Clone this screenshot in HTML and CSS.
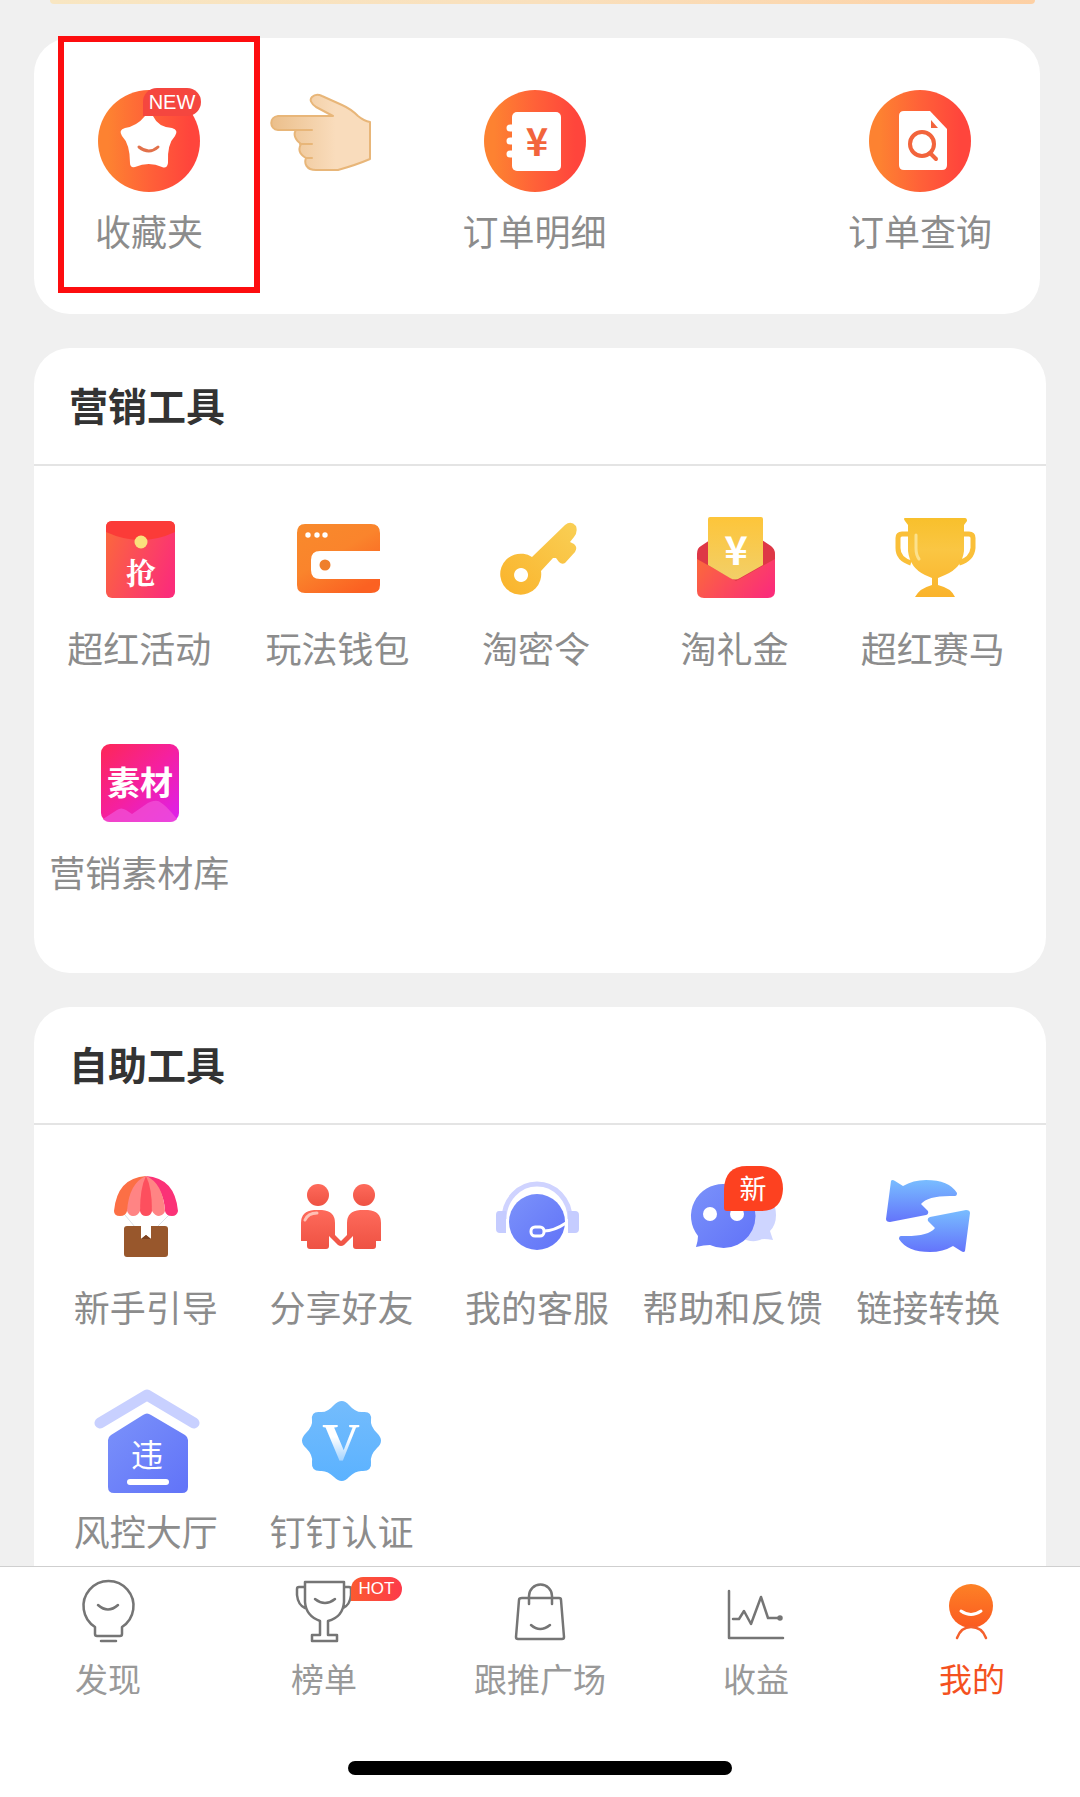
FILE: index.html
```html
<!DOCTYPE html>
<html lang="zh-CN">
<head>
<meta charset="utf-8">
<meta name="viewport" content="width=device-width, initial-scale=1">
<title>我的</title>
<link rel="stylesheet" href="styles.css">
</head>
<body>
<svg class="defs" aria-hidden="true">
  <defs>
    <linearGradient id="g-hot"><stop offset="0.1" stop-color="#fd8231"/><stop offset="0.5" stop-color="#ff6138"/><stop offset="0.9" stop-color="#ff453c"/></linearGradient>
    <linearGradient id="g-red" x1="0" y1="0.3" x2="1" y2="0.7"><stop offset="0" stop-color="#fb6440"/><stop offset="1" stop-color="#fb2d79"/></linearGradient>
    <linearGradient id="g-orange" x1="0" y1="0" x2="0.7" y2="1"><stop offset="0" stop-color="#f88a2c"/><stop offset="0.5" stop-color="#fa842c"/><stop offset="1" stop-color="#fb6122"/></linearGradient>
    <linearGradient id="g-gold" x1="1" y1="0" x2="0" y2="1"><stop offset="0" stop-color="#f9cf55"/><stop offset="1" stop-color="#fab32b"/></linearGradient>
    <linearGradient id="g-cup" x1="0" y1="0" x2="0" y2="1"><stop offset="0" stop-color="#f8c02c"/><stop offset="0.4" stop-color="#fac643"/><stop offset="1" stop-color="#fab32b"/></linearGradient>
    <linearGradient id="g-paper" x1="0" y1="0" x2="0" y2="1"><stop offset="0" stop-color="#fdc53a"/><stop offset="1" stop-color="#f2cf68"/></linearGradient>
    <linearGradient id="g-pink" x1="0" y1="0" x2="1" y2="1"><stop offset="0" stop-color="#fd2756"/><stop offset="0.5" stop-color="#f5209f"/><stop offset="1" stop-color="#dc20f0"/></linearGradient>
    <linearGradient id="g-people" x1="0" y1="0" x2="0" y2="1"><stop offset="0" stop-color="#fe6a5b"/><stop offset="1" stop-color="#ee5243"/></linearGradient>
    <linearGradient id="g-blue" x1="0" y1="0" x2="1" y2="1"><stop offset="0" stop-color="#7b92fa"/><stop offset="1" stop-color="#6173f8"/></linearGradient>
    <linearGradient id="g-arrow" x1="0" y1="0" x2="0" y2="1"><stop offset="0" stop-color="#79bdff"/><stop offset="1" stop-color="#6474fb"/></linearGradient>
    <linearGradient id="g-arrow2" x1="0" y1="1" x2="0" y2="0"><stop offset="0" stop-color="#79bdff"/><stop offset="1" stop-color="#6474fb"/></linearGradient>
    <linearGradient id="g-sky" x1="0" y1="0" x2="0" y2="1"><stop offset="0" stop-color="#74bcfc"/><stop offset="1" stop-color="#5bb2ff"/></linearGradient>
    <linearGradient id="g-v" x1="0" y1="0" x2="0" y2="1"><stop offset="0.4" stop-color="#fff"/><stop offset="0.8" stop-color="#a9d6ff"/></linearGradient>
    <linearGradient id="g-me" x1="0" y1="0" x2="0" y2="1"><stop offset="0" stop-color="#fd8126"/><stop offset="1" stop-color="#fb5a20"/></linearGradient>
    <linearGradient id="g-hand"><stop offset="0" stop-color="#ebbf8b"/><stop offset="0.65" stop-color="#f9dcbc"/></linearGradient>
  </defs>
</svg>

<main class="page">
  <div class="banner"></div>

  <section class="card shortcuts">
    <a class="item" href="#">
      <svg class="disc" viewBox="0 0 102 102"><circle cx="51" cy="51" r="51" fill="url(#g-hot)"/><path d="M47 26Q51 24 55 26Q60 37 74 38Q81 40 77 46Q69 54 70 73Q69 79 64 77Q51 71 37 77Q32 78 32 73Q32 54 24 46Q20 40 27 38Q39 36 47 26Z" fill="#fff"/><path d="M41 57Q51 65 60 57" fill="none" stroke="#e2714b" stroke-width="3" stroke-linecap="round"/></svg>
      <span class="label">收藏夹</span>
      <span class="tag tag-new">NEW</span>
    </a>
    <a class="item" href="#">
      <svg class="disc" viewBox="0 0 102 102"><circle cx="51" cy="51" r="51" fill="url(#g-hot)"/><rect x="28" y="22" width="49" height="59" rx="5" fill="#fff"/><path d="M26 38h6M26 51h6M26 64h6" stroke="#fff" stroke-width="7" stroke-linecap="round"/><text class="glyph glyph-yen" x="53" y="66">¥</text></svg>
      <span class="label">订单明细</span>
    </a>
    <a class="item" href="#">
      <svg class="disc" viewBox="0 0 102 102"><circle cx="51" cy="51" r="51" fill="url(#g-hot)"/><path d="M35 21H61L78 39V75Q78 80 73 80H35Q30 80 30 75V26Q30 21 35 21Z" fill="#fff"/><path d="M62 30V38H69Z" fill="#f2643c"/><circle cx="53" cy="54" r="12" fill="none" stroke="#f2643c" stroke-width="4"/><path d="M61 63l6 6" stroke="#f2643c" stroke-width="4" stroke-linecap="round"/></svg>
      <span class="label">订单查询</span>
    </a>
    <span class="highlight"></span>
    <svg class="hand" viewBox="0 0 102 78" aria-hidden="true"><path d="M8 23H63L46 14Q38 8 42 4Q46 0 52 3L72 12Q81 16 88 23Q94 28 100 29V66Q86 72 68 77H46C36 77 34 70 36 65C29 61 28 56 31 51C25 47 23 41 26 37H8C-1 36-1 24 8 23Z" fill="url(#g-hand)" stroke="#e8b679" stroke-width="2" stroke-linejoin="round"/><path d="M26 37H42M30 51H42M36 65H42" stroke="#e8b679" stroke-width="2" stroke-linecap="round"/></svg>
  </section>

  <section class="card">
    <h2 class="title">营销工具</h2>
    <div class="grid grid-wide">
      <a class="item" href="#">
        <svg class="icon" viewBox="0 0 110 110"><rect x="22" y="17" width="69" height="77" rx="6" fill="url(#g-red)"/><path d="M22 28V23Q22 17 28 17H85Q91 17 91 23V28Q57 44 22 28Z" fill="#fb3b38"/><circle cx="57" cy="38" r="6.500" fill="#fae17c"/><text class="glyph glyph-serif" x="57" y="80">抢</text></svg>
        <span class="label">超红活动</span>
      </a>
      <a class="item" href="#">
        <svg class="icon" viewBox="0 0 110 110"><path d="M22 20H88Q97 20 97 29V47H37Q28 47 28 56V66Q28 75 37 75H97V81Q97 89 88 89H22Q14 89 14 81V29Q14 20 22 20Z" fill="url(#g-orange)"/><circle cx="42" cy="61" r="5.500" fill="#ef7f2c"/><g fill="#fff"><circle cx="25" cy="31" r="2.700"/><circle cx="34" cy="31" r="2.700"/><circle cx="42" cy="31" r="2.700"/></g></svg>
        <span class="label">玩法钱包</span>
      </a>
      <a class="item" href="#">
        <svg class="icon" viewBox="0 0 110 110"><path fill="url(#g-gold)" fill-rule="evenodd" d="M51 53L84 21Q90 16 95 22Q97 28 93 33L89 38L93 40Q97 43 94 48L84 59Q81 61 78 58L75 54L72 54L60 67A20.500 20.500 0 1 1 51 53ZM40 64a7 7 0 1 0 .1 0Z"/></svg>
        <span class="label">淘密令</span>
      </a>
      <a class="item" href="#">
        <svg class="icon" viewBox="0 0 110 110"><path d="M18 57V50Q18 44 22 42L34 34H80L92 42Q96 45 96 50V57L80 80H34Z" fill="#de3746"/><path d="M18 55L57 77L96 55V87Q96 94 89 94H25Q18 94 18 87Z" fill="url(#g-red)"/><path d="M31 13H82Q84 13 84 15V61L61 74Q56 77 51 74L29 61V15Q29 13 31 13Z" fill="url(#g-paper)"/><text class="glyph glyph-cash" x="57" y="61">¥</text></svg>
        <span class="label">淘礼金</span>
      </a>
      <a class="item" href="#">
        <svg class="icon" viewBox="0 0 110 110"><path fill="url(#g-cup)" d="M27 14H87Q89 14 89 17L86 21V47Q84 64 67 71L60 74V81Q73 84 77 93H37Q42 84 54 81V74L47 71Q32 64 30 47V21L27 17Q25 14 27 14Z"/><path d="M31 30H24Q20 30 20 34V44Q20 55 33 59M85 30H91Q95 30 95 34V44Q94 55 81 59" fill="none" stroke="#fabf38" stroke-width="5"/><path d="M38 31V44Q38 51 41 55" stroke="#fce18d" stroke-width="3" stroke-linecap="round" fill="none"/></svg>
        <span class="label">超红赛马</span>
      </a>
      <a class="item" href="#">
        <svg class="icon" viewBox="0 0 110 110"><rect x="17" y="16" width="78" height="78" rx="9" fill="url(#g-pink)"/><path d="M19 91L33 82Q37 79 42 82L48 86L61 77Q68 72 74 73Q80 75 93 91Q91 94 86 94H26Q21 94 19 91Z" fill="#f154d8" opacity=".7"/><text class="glyph glyph-heavy" x="56" y="67">素材</text></svg>
        <span class="label">营销素材库</span>
      </a>
    </div>
  </section>

  <section class="card card-last">
    <h2 class="title">自助工具</h2>
    <div class="grid grid-narrow">
      <a class="item" href="#">
        <svg class="icon" viewBox="0 0 110 110"><path d="M34 52L44 64M78 52L66 64" stroke="#dbe0e6" stroke-width="1"/><path d="M55 13Q26 15 23 48Q23 53 29 53Q35 53 36 48Z" fill="#fc6f45"/><path d="M55 13Q84 15 87 48Q86 53 81 53Q75 53 74 48Q73 25 55 13Z" fill="#fb3277"/><path d="M55 13Q38 20 36 48Q38 53 42 53Q47 53 49 48L55 20L61 48Q64 53 68 53Q73 52 74 48Q72 20 55 13Z" fill="#ff8484"/><path d="M55 13Q49 25 49 48Q50 53 55 53Q60 53 61 48Q61 25 55 13Z" fill="#fd4f5e"/><path d="M36 63H50V76L55 72L60 76V63H74Q77 63 77 66V91Q77 94 74 94H36Q33 94 33 91V66Q33 63 36 63Z" fill="#98572c"/><path d="M50 76L55 72L60 76Z" fill="#7b4220"/></svg>
        <span class="label">新手引导</span>
      </a>
      <a class="item" href="#">
        <svg class="icon" viewBox="0 0 110 110"><g fill="url(#g-people)"><circle cx="32" cy="32" r="11"/><circle cx="78" cy="32" r="11"/><path d="M28 47H36Q49 48 49 60V72L55 78L61 72V60Q61 48 74 47H82Q95 48 95 60V78H90V83Q90 86 87 86H70Q67 86 67 83V73L58 82Q55 84 52 82L43 73V83Q43 86 40 86H24Q21 86 21 83V78H15V60Q15 48 28 47Z"/></g><path d="M19 57Q22 50 31 50" stroke="#ffc0b5" stroke-width="3" stroke-linecap="round" fill="none"/></svg>
        <span class="label">分享好友</span>
      </a>
      <a class="item" href="#">
        <svg class="icon" viewBox="0 0 110 110"><path d="M22 56A33 35 0 0 1 88 56" fill="none" stroke="#cfd3ff" stroke-width="5"/><path d="M17 48H24V70H18Q14 70 14 66V52Q14 48 17 48ZM86 48H93Q97 48 97 52V66Q97 70 93 70H86Z" fill="#c5ccff"/><circle cx="55" cy="59" r="28" fill="url(#g-blue)"/><rect x="49" y="64" width="13" height="9" rx="4" fill="none" stroke="#fff" stroke-width="3"/><path d="M62 68Q72 68 84 60" fill="none" stroke="#fff" stroke-width="3"/></svg>
        <span class="label">我的客服</span>
      </a>
      <a class="item" href="#">
        <svg class="icon" viewBox="0 0 110 110"><path d="M70 24Q98 30 98 52Q98 62 92 68L95 77Q84 75 82 77Q74 80 62 75Z" fill="#ced5ff"/><path d="M46 21A32 32 0 1 1 32 82Q26 82 18 84Q20 78 20 73A32 32 0 0 1 46 21Z" fill="url(#g-blue)"/><circle cx="32" cy="51" r="7" fill="#fff"/><circle cx="59" cy="51" r="7" fill="#fff"/><path d="M46 45V26Q47 3 69 3H83Q105 4 105 26Q104 48 83 48H49Q46 48 46 45Z" fill="#fd4120"/><text class="glyph glyph-badge" x="75" y="36">新</text></svg>
        <span class="label">帮助和反馈</span>
      </a>
      <a class="item" href="#">
        <svg class="icon" viewBox="0 0 110 110"><path d="M18 18Q19 16 22 18L30 23Q40 17 53 17Q76 17 84 30Q84 33 82 33Q55 32 48 41L55 48Q56 51 53 52L17 59Q13 59 13 56Z" fill="url(#g-arrow)"/><path d="M18 18Q19 16 22 18L30 23Q40 17 53 17Q76 17 84 30Q84 33 82 33Q55 32 48 41L55 48Q56 51 53 52L17 59Q13 59 13 56Z" transform="rotate(180 55 53)" fill="url(#g-arrow2)"/></svg>
        <span class="label">链接转换</span>
      </a>
      <a class="item" href="#">
        <svg class="icon" viewBox="0 0 110 110"><path d="M9 36L56 8L103 36" fill="none" stroke="#c8d0ff" stroke-width="11" stroke-linecap="round" stroke-linejoin="round"/><path d="M52 28Q56 25 60 28L94 48Q97 50 97 53V100Q97 106 91 106H23Q17 106 17 100V53Q17 50 20 48Z" fill="url(#g-blue)"/><text class="glyph glyph-house" x="56" y="80">违</text><rect x="36" y="92" width="42" height="6" rx="3" fill="#fff"/></svg>
        <span class="label">风控大厅</span>
      </a>
      <a class="item" href="#">
        <svg class="icon" viewBox="0 0 110 110"><path d="M48 18Q56 10 63 18Q70 26 77 25Q86 24 85 33Q84 39 91 46Q99 54 91 61Q84 68 85 75Q86 84 77 84Q70 83 63 90Q56 98 48 90Q41 83 34 84Q25 84 26 75Q27 68 20 61Q12 54 20 46Q27 39 26 33Q25 24 34 25Q41 26 48 18Z" fill="url(#g-sky)"/><text class="glyph glyph-v" x="55" y="73">V</text></svg>
        <span class="label">钉钉认证</span>
      </a>
    </div>
  </section>
</main>

<nav class="tabbar">
  <div class="tabs">
    <a class="tab" href="#"><svg class="tab-icon" viewBox="0 0 64 64"><path d="M19 49A25 25 0 1 1 46 49V56Q46 58 44 58H21Q19 58 19 56ZM22 27Q32 36 42 27M25 63H40"/></svg><span>发现</span></a>
    <a class="tab" href="#"><svg class="tab-icon" viewBox="0 0 64 64"><path d="M13 4H52V24Q51 39 36 43V57H45V63H20V57H28V43Q14 38 13 24ZM13 9H7Q5 9 5 11V17Q6 27 13 30M52 9H57Q59 9 59 11V17Q58 27 51 30M23 21Q33 29 43 21"/></svg><span>榜单</span><span class="tag tag-hot">HOT</span></a>
    <a class="tab" href="#"><svg class="tab-icon" viewBox="0 0 64 64"><path d="M14 20H51Q53 20 53 22L56 59Q56 61 54 61H10Q8 61 8 59L11 22Q11 20 14 20ZM21 26V18A11 11 0 0 1 44 18V26M23 47Q32 55 42 47"/></svg><span>跟推广场</span></a>
    <a class="tab" href="#"><svg class="tab-icon" viewBox="0 0 64 64"><path d="M5 13V60H59M9 41H15L20 33L27 46L37 19L44 40H56"/><circle cx="56" cy="40" r="1.500"/></svg><span>收益</span></a>
    <a class="tab tab-active" href="#" aria-current="page"><svg class="tab-icon" viewBox="0 0 64 64"><circle class="fill" cx="31" cy="28" r="22"/><path d="M17 60Q21 49 31 49Q42 49 46 60"/><path class="smile" d="M21 33Q31 40 41 33"/></svg><span>我的</span></a>
  </div>
  <div class="home-indicator"></div>
</nav>
</body>
</html>
```
FILE: styles.css
```css
* { box-sizing: border-box; }

body {
  margin: 0;
  background: #f0f0f0;
  color: #8c8c8c;
  font-family: "Noto Sans CJK SC", sans-serif;
  font-size: 36px;
  line-height: 50px;
}

a { color: inherit; text-decoration: none; }

.defs { position: absolute; width: 0; height: 0; }

.page { padding: 0 34px; }

.banner {
  height: 4px;
  margin: 0 11px 34px 16px;
  border-radius: 0 0 8px 8px;
  background: linear-gradient(90deg, #f8e6c2, #f9e0bd 50%, #fdd0a4);
}

.card {
  margin-bottom: 34px;
  border-radius: 36px;
  background: #fff;
}

.card-last {
  margin-bottom: 0;
  padding-bottom: 11px;
  border-radius: 36px 36px 0 0;
}

.item {
  position: relative;
  display: flex;
  flex-direction: column;
  align-items: center;
  gap: 8px;
  white-space: nowrap;
}

.shortcuts {
  position: relative;
  display: flex;
  justify-content: space-between;
  margin-right: 6px;
  padding: 52px 48px 59px 43px;
}

.shortcuts .item { width: 144px; gap: 13px; }

.disc { width: 102px; height: 102px; }

.tag {
  position: absolute;
  color: #fff;
  font-family: "Liberation Sans", sans-serif;
  text-align: center;
}

.tag-new {
  top: -2px;
  left: 66px;
  width: 58px;
  border-radius: 14px 14px 14px 0;
  background: #f5463f;
  font-size: 20px;
  line-height: 28px;
}

.highlight {
  position: absolute;
  top: -2px;
  left: 24px;
  width: 202px;
  height: 257px;
  border: 6px solid #fd0d0f;
}

.hand {
  position: absolute;
  top: 55px;
  left: 236px;
  width: 102px;
  height: 78px;
}

.title {
  margin: 0;
  padding: 31px 35px 35px;
  border-bottom: 2px solid #e4e4e4;
  color: #333;
  font-size: 39px;
  font-weight: 700;
  line-height: 50px;
}

.grid {
  display: grid;
  grid-template-columns: repeat(5, minmax(0, 1fr));
  row-gap: 56px;
}

.grid-wide { padding: 38px 14px 77px 6px; }
.grid-narrow { padding: 38px 20px 0 14px; }

.icon { width: 110px; height: 110px; }

.glyph { fill: #fff; text-anchor: middle; }
.glyph-yen { fill: #f2643c; font-size: 38px; font-weight: 700; }
.glyph-cash { font-size: 40px; font-weight: 700; }
.glyph-serif { font: 700 30px "Noto Serif CJK SC", "Noto Sans CJK SC", serif; }
.glyph-heavy { font-size: 33px; font-weight: 700; }
.glyph-badge { font-size: 27px; }
.glyph-house { font-size: 32px; }
.glyph-v { fill: url(#g-v); font: 700 52px "Liberation Serif", serif; }

.tabbar {
  padding: 11px 0 22px;
  border-top: 1px solid #cfcfcf;
  background: #fff;
}

.tabs {
  display: grid;
  grid-template-columns: repeat(5, 1fr);
}

.tab {
  position: relative;
  display: flex;
  flex-direction: column;
  align-items: center;
  gap: 13px;
  color: #999;
  font-size: 33px;
  line-height: 46px;
}

.tab-icon {
  width: 64px;
  height: 64px;
  fill: none;
  stroke: #757575;
  stroke-width: 2.5;
  stroke-linecap: round;
  stroke-linejoin: round;
  overflow: visible;
}

.tab-active { color: #f4511e; }
.tab-active .tab-icon { stroke: #f4602c; }
.tab-active .fill { fill: url(#g-me); stroke: none; }
.tab-active .smile { stroke: #fff; stroke-width: 3; }

.tag-hot {
  top: -1px;
  left: calc(50% + 27px);
  width: 51px;
  border-radius: 12px 12px 12px 0;
  background: linear-gradient(90deg, #fb5a30, #fd3a4a);
  font-size: 17px;
  line-height: 24px;
}

.home-indicator {
  width: 384px;
  max-width: 60%;
  height: 14px;
  margin: 60px auto 0;
  border-radius: 7px;
  background: #000;
}
```
